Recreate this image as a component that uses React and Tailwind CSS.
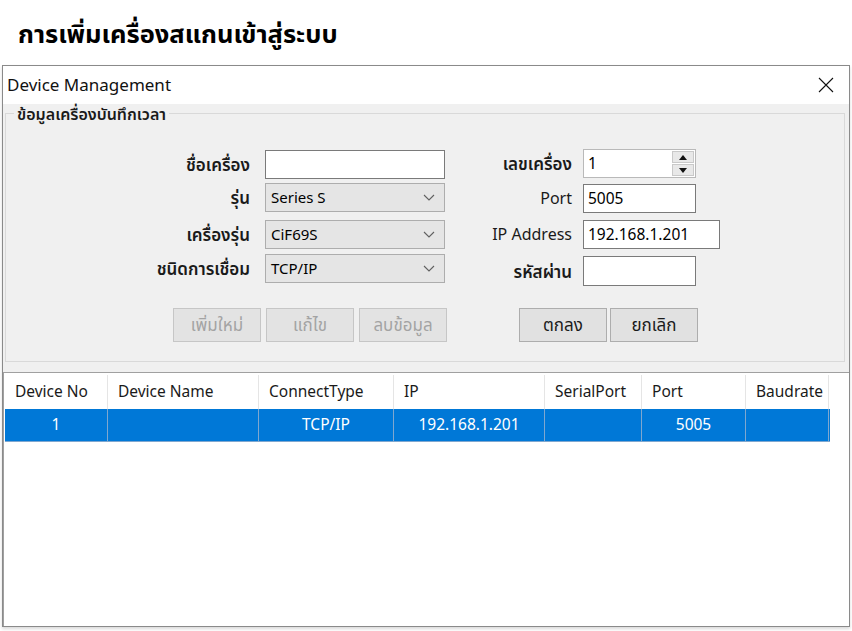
import React from "react";

const font = { fontFamily: '"Noto Sans", "Noto Sans Thai", "Liberation Sans", sans-serif' };

const columns = [
  { name: "Device No", cls: "w-[103px]", val: "1" },
  { name: "Device Name", cls: "w-[151px]", val: "" },
  { name: "ConnectType", cls: "w-[135px]", val: "TCP/IP" },
  { name: "IP", cls: "w-[151px]", val: "192.168.1.201" },
  { name: "SerialPort", cls: "w-[97px]", val: "" },
  { name: "Port", cls: "w-[104px]", val: "5005" },
  { name: "Baudrate", cls: "w-[83px]", val: "" },
];

const Chevron = () => (
  <svg width="12" height="7" viewBox="0 0 12 7" className="shrink-0">
    <path d="M1 1 L6 6 L11 1" fill="none" stroke="#606060" strokeWidth="1.1" />
  </svg>
);

// combo box (windows dropdown look)
const Combo = ({ value }) => (
  <div className="h-[29px] w-[180px] flex items-center justify-between pl-[5px] pr-[9px] bg-[#e5e5e5] border border-[#adadad] text-[15px]">
    <span>{value}</span>
    <Chevron />
  </div>
);

const TextBox = ({ value = "", cls = "w-[113px]" }) => (
  <div
    className={`h-[29px] flex items-center pl-[4px] bg-white border border-[#7a7a7a] text-[15.5px] ${cls}`}
  >
    {value}
  </div>
);

// thai labels render heavier than the latin ones
const Label = ({ children, latin }) => (
  <div
    className={`w-[100px] text-right leading-[29px] whitespace-nowrap text-[#1a1a1a] ${
      latin ? "text-[16px] font-normal" : "text-[17px] font-semibold"
    }`}
  >
    {children}
  </div>
);

const Button = ({ children, disabled }) => (
  <div
    className={`h-[34px] w-[88px] flex items-center justify-center border text-[17px] ${
      disabled
        ? "bg-[#e3e3e3] border-[#c6c6c6] text-[#a3a3a3]"
        : "bg-[#e1e1e1] border-[#adadad] text-[#1a1a1a]"
    }`}
  >
    {children}
  </div>
);

const Spinner = () => (
  <div className="h-[29px] w-[113px] flex items-center justify-between pl-[4px] pr-[1px] bg-white border border-[#b9b9b9] text-[15.5px]">
    <span>1</span>
    <div className="flex flex-col gap-[1px] h-[25px] w-[22px]">
      <div className="flex-1 flex items-center justify-center bg-[#e8e8e8] border border-[#c9c9c9]">
        <svg width="8" height="5" viewBox="0 0 8 5">
          <path d="M0 5 L4 0 L8 5 Z" fill="#111" />
        </svg>
      </div>
      <div className="flex-1 flex items-center justify-center bg-[#e8e8e8] border border-[#c9c9c9]">
        <svg width="8" height="5" viewBox="0 0 8 5">
          <path d="M0 0 L4 5 L8 0 Z" fill="#111" />
        </svg>
      </div>
    </div>
  </div>
);

export default function App() {
  return (
    <div className="w-[852px] h-[631px] bg-white overflow-hidden text-black" style={font}>
      {/* page heading */}
      <div className="h-[65px] pl-[18px] pt-[15px]">
        <h1 className="text-[25.5px] font-bold leading-[36px]">การเพิ่มเครื่องสแกนเข้าสู่ระบบ</h1>
      </div>

      {/* window */}
      <div className="ml-[2px] w-[848px] h-[562px] border border-[#8a8a8a] flex flex-col shadow-[0_2px_3px_rgba(0,0,0,0.15)]">
        {/* title bar */}
        <div className="h-[38px] bg-white flex items-center justify-between pl-[4px] pr-[15px]">
          <span className="text-[17px] text-[#111]">Device Management</span>
          <svg width="16" height="16" viewBox="0 0 16 16">
            <path d="M1 1 L15 15 M15 1 L1 15" stroke="#111" strokeWidth="1.1" />
          </svg>
        </div>

        {/* body */}
        <div className="bg-[#f0f0f0] pt-[9px] flex flex-col">
          <div className="relative ml-[2px] mr-[4px] border border-[#d9d9d9] pt-[35px] pb-[19px]">
            <span className="absolute -top-[9px] left-[8px] bg-[#f0f0f0] px-[3px] text-[16px] leading-[18px] font-semibold text-[#1a1a1a]">
              ข้อมูลเครื่องบันทึกเวลา
            </span>

            <div className="flex">
              {/* left side */}
              <div className="ml-[144px] w-[295px] mt-[1px] flex flex-col">
                <div className="flex items-center gap-[15px]">
                  <Label>ชื่อเครื่อง</Label>
                  <TextBox cls="w-[180px]" />
                </div>
                <div className="flex items-center gap-[15px] mt-[4px]">
                  <Label>รุ่น</Label>
                  <Combo value="Series S" />
                </div>
                <div className="flex items-center gap-[15px] mt-[8px]">
                  <Label>เครื่องรุ่น</Label>
                  <Combo value="CiF69S" />
                </div>
                <div className="flex items-center gap-[15px] mt-[5px]">
                  <Label>ชนิดการเชื่อม</Label>
                  <Combo value="TCP/IP" />
                </div>
              </div>

              {/* right side */}
              <div className="ml-[27px] flex flex-col">
                <div className="flex items-center gap-[11px]">
                  <Label>เลขเครื่อง</Label>
                  <Spinner />
                </div>
                <div className="flex items-center gap-[11px] mt-[6px]">
                  <Label latin>Port</Label>
                  <TextBox value="5005" />
                </div>
                <div className="flex items-center gap-[11px] mt-[7px]">
                  <Label latin>IP Address</Label>
                  <TextBox value="192.168.1.201" cls="w-[137px]" />
                </div>
                <div className="flex items-center gap-[11px] mt-[7px]">
                  <Label>รหัสผ่าน</Label>
                  <TextBox cls="w-[113px] h-[30px]" />
                </div>
              </div>
            </div>

            {/* buttons */}
            <div className="flex mt-[22px]">
              <div className="ml-[167px] flex gap-[5px]">
                <Button disabled>เพิ่มใหม่</Button>
                <Button disabled>แก้ไข</Button>
                <Button disabled>ลบข้อมูล</Button>
              </div>
              <div className="ml-[72px] flex gap-[3px]">
                <Button>ตกลง</Button>
                <Button>ยกเลิก</Button>
              </div>
            </div>
          </div>
          <div className="h-[10px]" />
        </div>

        {/* device list */}
        <div className="flex-1 bg-white border-t border-l border-[#a0a0a0] pl-[1px] pt-[2px]">
          <div className="flex h-[34px]">
            {columns.map((c) => (
              <div
                key={c.name}
                className={`${c.cls} border-r border-[#e5e5e5] pl-[10px] flex items-center text-[15.5px] text-[#1a1a1a]`}
              >
                {c.name}
              </div>
            ))}
          </div>
          <div className="flex h-[33px] bg-[#0078d7] w-[825px] border-b border-[#7fa7cf]">
            {columns.map((c) => (
              <div
                key={c.name}
                className={`${c.cls} border-r border-[#7fa7cf] flex items-center justify-center text-[15.5px] text-white`}
              >
                {c.val}
              </div>
            ))}
          </div>
        </div>
      </div>
    </div>
  );
}
